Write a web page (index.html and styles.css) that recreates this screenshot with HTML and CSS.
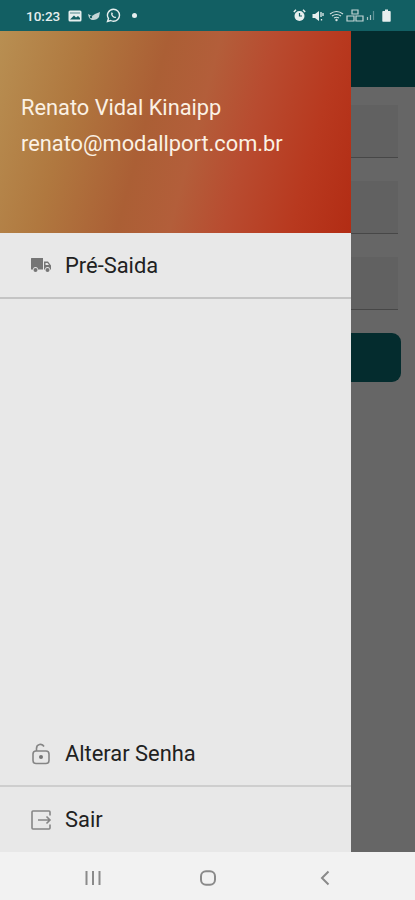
FILE: index.html
```html
<!DOCTYPE html>
<html lang="pt-BR">
<head>
  <meta charset="UTF-8" />
  <meta name="viewport" content="width=device-width, initial-scale=1.0"/>
  <title>Pré-Saida</title>
  <link rel="stylesheet" href="styles.css">
</head>
<body>

  <div class="phone">
    <div class="status-bar">
      <div class="status-left">
        <span class="clock">10:23</span>
        <svg class="st-icon" width="14" height="12" viewBox="0 0 14 12"><rect x="0.5" y="0.5" width="13" height="11" rx="1.5" fill="#e6eeee"/><path d="M2 9.5 L6 5.5 L8 7.5 L10 6 L12 8 V9.5 Z" fill="#125f63"/><path d="M2 2 H12 V4 H2 Z" fill="#125f63" opacity=".35"/></svg>
        <svg class="st-icon" width="14" height="10" viewBox="0 0 14 10"><path d="M1 3 L5 5 L8 3 L13 1 L12 6 Q10 9 6 9 Q2 9 1 3 Z" fill="#c4d6d6"/><circle cx="4" cy="6" r="1.2" fill="#125f63"/></svg>
        <svg class="st-icon" width="15" height="15" viewBox="0 0 15 15"><path d="M7.5 1.2 A6 6 0 0 1 7.5 13.2 A6 6 0 0 1 4.6 12.5 L1.5 13.5 L2.5 10.5 A6 6 0 0 1 7.5 1.2 Z" fill="none" stroke="#e6eeee" stroke-width="1.4"/><path d="M5.2 4.6 Q4.6 7 6.4 8.8 Q8.2 10.5 10.2 9.8 L9.3 8.4 L8.3 8.8 Q7 8 6.4 6.6 L7 5.8 L6.2 4.4 Z" fill="#e6eeee"/></svg>
        <span class="dot"></span>
      </div>
      <div class="status-right">
        <svg class="st-icon alarm" width="13" height="13" viewBox="0 0 13 13"><circle cx="6.5" cy="7" r="5" fill="#e6eeee"/><path d="M6.5 4 V7 H9" fill="none" stroke="#125f63" stroke-width="1.2"/><path d="M0.8 3 L3 0.8 M12.2 3 L10 0.8" stroke="#e6eeee" stroke-width="1.5"/></svg>
        <svg class="st-icon mute" width="12" height="12" viewBox="0 0 12 12"><path d="M0.5 4 H3 L7 1 V11 L3 8 H0.5 Z" fill="#e6eeee"/><path d="M9 2 V7 M11 3 V6 M9.5 9 V10.5" stroke="#e6eeee" stroke-width="1.3"/></svg>
        <svg class="st-icon" width="15" height="12" viewBox="0 0 15 12"><path d="M1 4 Q7.5 -1 14 4 M3 6 Q7.5 3 12 6 M5 8 Q7.5 6.5 10 8" fill="none" stroke="#d3e0e0" stroke-width="1.2"/><circle cx="7.5" cy="10" r="1.2" fill="#d3e0e0"/></svg>
        <svg class="st-icon" width="18" height="13" viewBox="0 0 18 13"><path d="M1 7 H8 V12 H1 Z M10 7 H17 V12 H10 Z M6 1 H12 V5 H6 Z" fill="none" stroke="#c4d6d6" stroke-width="1.2"/></svg>
        <svg class="st-icon" width="9" height="11" viewBox="0 0 9 11"><path d="M1.5 7 V10 M4.5 5 V10" stroke="#a9c4c4" stroke-width="1.2"/><path d="M7.5 1 V10" stroke="#5f9295" stroke-width="1.2"/></svg>
        <svg class="st-icon battery" width="9" height="13" viewBox="0 0 9 13"><path d="M3 0.5 H6 V2 H8 Q8.7 2 8.7 3 V12 Q8.7 12.7 8 12.7 H1 Q0.3 12.7 0.3 12 V3 Q0.3 2 1 2 H3 Z" fill="#e6eeee"/></svg>
      </div>
    </div>

    <div class="screen">
      <!-- tela de tras, escurecida pelo menu -->
      <div class="app">
        <div class="app-header"></div>
        <div class="app-form">
          <div class="field"></div>
          <div class="field"></div>
          <div class="field"></div>
          <div class="app-button"></div>
        </div>
      </div>

      <div class="drawer">
        <div class="drawer-header">
          <p>Renato Vidal Kinaipp</p>
          <p>renato@modallport.com.br</p>
        </div>
        <div class="menu-item top-item">
          <svg class="menu-icon" width="22" height="16" viewBox="0 0 22 16"><path d="M1 1.5 Q1 1 1.5 1 H13 V12.5 H8 A2.5 2.5 0 0 0 3 12.5 H1 Z" fill="#757575"/><path d="M14 4.5 H18 L21 8.5 V12.5 H20 A2.5 2.5 0 0 0 15 12.5 H14 Z" fill="#757575"/><circle cx="5.5" cy="13" r="2" fill="#757575"/><circle cx="17.5" cy="13" r="2" fill="#757575"/><path d="M15.5 6 H17.5 L19 8 H15.5 Z" fill="#e8e8e8"/></svg>
          <span>Pré-Saida</span>
        </div>
        <div class="menu-space"></div>
        <div class="menu-item lock-item">
          <svg class="menu-icon" width="22" height="22" viewBox="0 0 22 22"><rect x="3" y="8" width="16" height="12.5" rx="3" fill="none" stroke="#858585" stroke-width="1.6"/><path d="M6.5 8 V5.5 A4 4 0 0 1 14 3.5" fill="none" stroke="#858585" stroke-width="1.6"/><circle cx="11" cy="14" r="2" fill="#757575"/></svg>
          <span>Alterar Senha</span>
        </div>
        <div class="menu-item">
          <svg class="menu-icon" width="22" height="22" viewBox="0 0 22 22"><path d="M20 6.5 V3 Q20 2 19 2 H3 Q2 2 2 3 V19 Q2 20 3 20 H19 Q20 20 20 19 V15.5" fill="none" stroke="#858585" stroke-width="1.6"/><path d="M8 11 H20 M16.5 7.5 L20 11 L16.5 14.5" fill="none" stroke="#858585" stroke-width="1.6"/></svg>
          <span>Sair</span>
        </div>
      </div>
    </div>

    <div class="nav-bar">
      <svg width="18" height="16" viewBox="0 0 18 16"><path d="M2.5 1 V15 M9 1 V15 M15.5 1 V15" stroke="#8a8a8a" stroke-width="2"/></svg>
      <svg class="nav-home" width="18" height="16" viewBox="0 0 18 16"><rect x="2" y="1.2" width="14" height="13.6" rx="5" fill="none" stroke="#8a8a8a" stroke-width="2"/></svg>
      <svg width="12" height="16" viewBox="0 0 12 16"><path d="M9.5 1.5 L3 8 L9.5 14.5" fill="none" stroke="#8a8a8a" stroke-width="2"/></svg>
    </div>
  </div>

</body>
</html>
```

FILE: styles.css
```css
body {
  margin: 0;
  font-family: 'Roboto', sans-serif;
  background-color: #666;
}

.phone {
  width: 415px;
  height: 900px;
  display: flex;
  flex-direction: column;
  overflow: hidden;
}

.status-bar {
  height: 31px;
  flex-shrink: 0;
  background-color: #125f63;
  display: flex;
  justify-content: space-between;
  align-items: center;
  padding: 0 24px 0 26px;
  color: #e6eeee;
}

.status-left,
.status-right {
  display: flex;
  align-items: center;
  gap: 5px;
}

.status-right {
  gap: 2px;
}

.alarm {
  margin-right: 4px;
}

.mute {
  margin-right: 3px;
}

.battery {
  margin-left: 5px;
}

.clock {
  font-size: 13.5px;
  font-weight: 500;
  margin-right: 3px;
}

.dot {
  width: 5px;
  height: 5px;
  margin-left: 6px;
  border-radius: 50%;
  background-color: #e6eeee;
}

.screen {
  flex: 1;
  position: relative;
  min-height: 0;
}

.app {
  height: 100%;
  background-color: #666;
}

.app-header {
  height: 56px;
  background-color: #042c2e;
}

.app-form {
  display: flex;
  flex-direction: column;
  padding: 18px 14px 0 0;
}

.field {
  height: 52px;
  margin-bottom: 23px;
  background-color: #616161;
  border-bottom: 1px solid #474747;
  margin-right: 3px;
}

.app-button {
  height: 49px;
  background-color: #042c2e;
  border-radius: 9px;
}

.drawer {
  position: absolute;
  top: 0;
  left: 0;
  bottom: 0;
  width: 351px;
  display: flex;
  flex-direction: column;
  background-color: #e8e8e8;
}

.drawer-header {
  height: 202px;
  box-sizing: border-box;
  padding: 64px 0 0 21px;
  background: linear-gradient(105deg, #b88f52 0%, #b0783f 22%, #ab5f35 42%, #b35e3a 55%, #b84c30 68%, #b8391f 85%, #b22c14 100%);
  color: #fbf1e4;
  font-size: 21.8px;
}

.drawer-header p {
  margin: 0 0 11px;
  line-height: 25px;
}

.menu-item {
  height: 65px;
  box-sizing: border-box;
  display: flex;
  align-items: center;
  padding-left: 30px;
  font-size: 21.9px;
  color: #212121;
}

.menu-item span {
  margin-left: 13px;
}

.menu-icon {
  flex-shrink: 0;
}

.top-item {
  height: 66px;
  border-bottom: 2px solid #c4c4c4;
}

.lock-item {
  border-bottom: 2px solid #cecece;
}

.menu-space {
  flex: 1;
}

.nav-bar {
  height: 48px;
  flex-shrink: 0;
  box-sizing: border-box;
  background-color: #f2f2f2;
  display: flex;
  align-items: center;
  padding: 4px 84px 0;
  justify-content: space-between;
}

.nav-home {
  margin-left: -5px;
}
```
